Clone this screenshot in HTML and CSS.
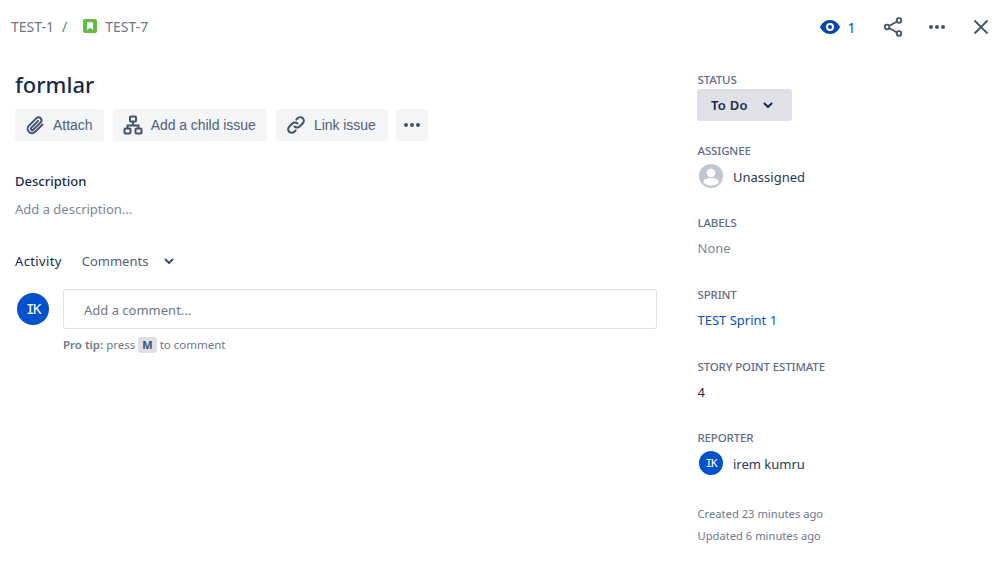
FILE: index.html
```html
<!DOCTYPE html>
<html lang="en">
<head>
<meta charset="utf-8">
<title>TEST-7</title>
<link rel="stylesheet" href="styles.css">
</head>
<body>
<div class="page">
  <main class="main">
    <nav class="crumbs">
      <span>TEST-1</span><span class="slash">/</span>
      <svg class="story" width="14" height="14" viewBox="0 0 14 14"><rect width="14" height="14" rx="2" fill="#65ba43"/><path d="M4 3.2h6v7.8L7 8.8 4 11z" fill="#fff"/></svg>
      <span>TEST-7</span>
    </nav>
    <h1 class="title">formlar</h1>
    <div class="actions">
      <button class="btn">
        <svg width="24" height="24" viewBox="0 0 24 24" fill="none" stroke="#42526e" stroke-width="2" stroke-linecap="round"><path d="M19.5 11.5l-7.6 7.6a4.4 4.4 0 0 1-6.2-6.2l8-8a3 3 0 0 1 4.2 4.2l-7.6 7.6a1.4 1.4 0 0 1-2-2l6.8-6.8"/></svg>
        Attach
      </button>
      <button class="btn">
        <svg width="24" height="24" viewBox="0 0 24 24" fill="none" stroke="#42526e" stroke-width="2"><rect x="9" y="3.500" width="6" height="5" rx="1"/><rect x="3.500" y="15.500" width="6" height="5" rx="1"/><rect x="14.500" y="15.500" width="6" height="5" rx="1"/><path d="M12 8.500v4M6.500 15.500V12.500h11v3"/></svg>
        Add a child issue
      </button>
      <button class="btn">
        <svg width="24" height="24" viewBox="0 0 24 24" fill="none" stroke="#42526e" stroke-width="2" stroke-linecap="round"><path d="M10.500 13.500a3.600 3.600 0 0 0 5.100 0l3.200-3.200a3.600 3.600 0 0 0-5.100-5.100l-1.400 1.400"/><path d="M13.500 10.500a3.600 3.600 0 0 0-5.100 0l-3.200 3.200a3.600 3.600 0 0 0 5.100 5.100l1.400-1.400"/></svg>
        Link issue
      </button>
      <button class="btn btn-more" aria-label="More">
        <svg width="18" height="6" viewBox="0 0 18 6" fill="#42526e"><circle cx="3" cy="3" r="2"/><circle cx="9" cy="3" r="2"/><circle cx="15" cy="3" r="2"/></svg>
      </button>
    </div>
    <h2 class="desc-head">Description</h2>
    <p class="desc-ph">Add a description...</p>
    <div class="activity">
      <span class="activity-label">Activity</span>
      <span class="activity-filter">Comments</span>
      <svg width="10" height="7" viewBox="0 0 10 7" fill="none" stroke="#42526e" stroke-width="2" stroke-linecap="round" stroke-linejoin="round"><path d="M1.500 1.500L5 5l3.500-3.500"/></svg>
    </div>
    <div class="comment">
      <div class="avatar avatar-lg">IK</div>
      <div class="comment-body">
        <div class="comment-box">Add a comment...</div>
        <p class="tip"><b>Pro tip:</b> press <kbd>M</kbd> to comment</p>
      </div>
    </div>
  </main>
  <aside class="side">
    <div class="topbar">
      <svg class="eye" width="20" height="14" viewBox="0 0 20 14"><path d="M10 0C5 0 1.500 3.500 0 7c1.500 3.500 5 7 10 7s8.500-3.500 10-7c-1.500-3.500-5-7-10-7z" fill="#0747a6"/><circle cx="10" cy="7" r="4" fill="#fff"/><circle cx="10" cy="7" r="2" fill="#0747a6"/></svg>
      <span class="count">1</span>
      <svg class="share" width="20" height="20" viewBox="0 0 20 20" fill="none" stroke="#42526e" stroke-width="1.800"><circle cx="4" cy="10" r="2.300"/><circle cx="16" cy="3.500" r="2.300"/><circle cx="16" cy="16.500" r="2.300"/><path d="M6 9l8-4.500M6 11l8 4.500"/></svg>
      <svg class="dots" width="18" height="6" viewBox="0 0 18 6" fill="#42526e"><circle cx="3" cy="3" r="2"/><circle cx="9" cy="3" r="2"/><circle cx="15" cy="3" r="2"/></svg>
      <svg class="close" width="16" height="16" viewBox="0 0 16 16" fill="none" stroke="#42526e" stroke-width="1.800"><path d="M1.500 1.500l13 13M14.500 1.500l-13 13"/></svg>
    </div>
    <section class="field field-status">
      <h3 class="label">STATUS</h3>
      <button class="status">To Do
        <svg width="10" height="7" viewBox="0 0 10 7" fill="none" stroke="#172b4d" stroke-width="2" stroke-linecap="round" stroke-linejoin="round"><path d="M1.500 1.500L5 5l3.500-3.500"/></svg>
      </button>
    </section>
    <section class="field">
      <h3 class="label">ASSIGNEE</h3>
      <div class="person">
        <svg class="unassigned" width="24" height="24" viewBox="0 0 24 24"><circle cx="12" cy="12" r="12" fill="#c1c7d0"/><circle cx="12" cy="9" r="4.300" fill="#fff"/><path d="M4.500 18.500c0-3 3-4.500 7.500-4.500s7.500 1.500 7.500 4.500v.5a12 12 0 0 1-15 0z" fill="#fff"/></svg>
        <span class="person-name">Unassigned</span>
      </div>
    </section>
    <section class="field">
      <h3 class="label">LABELS</h3>
      <div class="value muted">None</div>
    </section>
    <section class="field">
      <h3 class="label">SPRINT</h3>
      <div class="value link">TEST Sprint 1</div>
    </section>
    <section class="field field-tight">
      <h3 class="label">STORY POINT ESTIMATE</h3>
      <div class="value">4</div>
    </section>
    <section class="field">
      <h3 class="label">REPORTER</h3>
      <div class="person">
        <div class="avatar avatar-sm">IK</div>
        <span class="person-name">irem kumru</span>
      </div>
    </section>
    <p class="stamp stamp-first">Created 23 minutes ago</p>
    <p class="stamp">Updated 6 minutes ago</p>
  </aside>
</div>
</body>
</html>
```

FILE: styles.css
```css
* { box-sizing: border-box; }
html, body { margin: 0; padding: 0; background: #fff; }
body {
  width: 999px;
  height: 562px;
  overflow: hidden;
  font-family: "Noto Sans", "Open Sans", sans-serif;
  color: #172b4d;
}
h1, h2, h3, p { margin: 0; font-weight: 400; }
.page { display: flex; height: 562px; }
.main { width: 697px; padding: 16px 40px 0 15px; flex: none; }
.side { flex: 1; }

.crumbs {
  display: flex;
  align-items: center;
  height: 20px;
  margin-left: -4px;
  font-size: 14px;
  color: #6b778c;
}
.slash { margin: 0 16px 0 8px; }
.story { margin-right: 8px; }

.title {
  margin-top: 33px;
  font-size: 22px;
  line-height: 30px;
  color: #172b4d;
  font-weight: 500;
}

.actions { display: flex; gap: 8.500px; margin-top: 10px; }
.btn {
  display: flex;
  align-items: center;
  gap: 6px;
  height: 32px;
  padding: 0 11.800px 0 8px;
  border: 0;
  border-radius: 3px;
  background: #f4f5f7;
  color: #505f79;
  font-family: "Liberation Sans", Arial, sans-serif;
  font-size: 14px;
  letter-spacing: -0.050px;
}
.btn-more { width: 32px; padding: 0; justify-content: center; }

.desc-head { margin-top: 30px; font-size: 13px; line-height: 20px; font-weight: 500; color: #172b4d; }
.desc-ph { margin-top: 8px; font-size: 13px; line-height: 20px; color: #7a869a; }

.activity { display: flex; align-items: center; margin-top: 32px; height: 20px; font-size: 13px; }
.activity-label { color: #172b4d; letter-spacing: 0.350px; }
.activity-filter { margin: 0 16px 0 20px; color: #505f79; }

.comment { display: flex; margin-top: 18px; }
.avatar {
  display: flex;
  align-items: center;
  justify-content: center;
  flex: none;
  border-radius: 50%;
  background: #0052cc;
  color: #fff;
  font-family: "DejaVu Sans Mono", monospace;
  font-weight: 400;
}
.avatar-lg { width: 32px; height: 32px; margin: 4px 14px 0 2px; font-size: 14px; letter-spacing: -1.500px; }
.avatar-sm { width: 24px; height: 24px; font-size: 11px; letter-spacing: -1.200px; }
.comment-body { flex: 1; }
.comment-box {
  height: 40px;
  padding: 0 20px;
  border: 1px solid #dfe1e6;
  border-radius: 3px;
  font-size: 13px;
  line-height: 40px;
  color: #6b778c;
}
.tip { margin-top: 8px; font-size: 11.500px; line-height: 16px; color: #6b778c; }
.tip b { font-weight: 600; }
kbd {
  display: inline-block;
  padding: 0 4px;
  border-radius: 3px;
  background: #dfe1e6;
  font-family: inherit;
  font-weight: 700;
  color: #42526e;
  font-size: 11px;
}

.topbar { display: flex; align-items: center; height: 24px; margin-top: 15px; padding-left: 123px; }
.count { margin-left: 7.500px; font-size: 14px; color: #0052cc; }
.share { margin-left: 27.500px; }
.dots { margin-left: 25px; }
.close { margin-left: 27px; }

.field { margin-bottom: 27px; }
.field-status { margin-top: 33px; margin-bottom: 22px; }
.field-tight { margin-bottom: 26px; }
.label { padding-left: 0.500px; font-size: 11.500px; line-height: 16px; color: #5e6c84; font-weight: 500; letter-spacing: -0.150px; }
.status {
  display: flex;
  align-items: center;
  justify-content: space-between;
  width: 95px;
  height: 32px;
  margin-top: 1px;
  padding: 0 19px 0 14px;
  border: 0;
  border-radius: 3px;
  background: #dfe1e6;
  color: #172b4d;
  font-family: inherit;
  font-size: 13px;
  font-weight: 600;
  letter-spacing: 0.300px;
}
.person { display: flex; align-items: center; gap: 10px; height: 24px; margin-top: 5px; padding-left: 2px; font-size: 13px; color: #253858; }
.person-name { padding-top: 2px; }
.value { height: 24px; margin-top: 5px; padding-left: 0.500px; font-size: 13px; line-height: 24px; color: #172b4d; }
.muted { color: #7a869a; }
.link { color: #0052cc; }
.stamp { padding-left: 0.500px; font-size: 11.200px; line-height: 22px; color: #6b778c; }
.stamp-first { margin-top: 28px; }
```
